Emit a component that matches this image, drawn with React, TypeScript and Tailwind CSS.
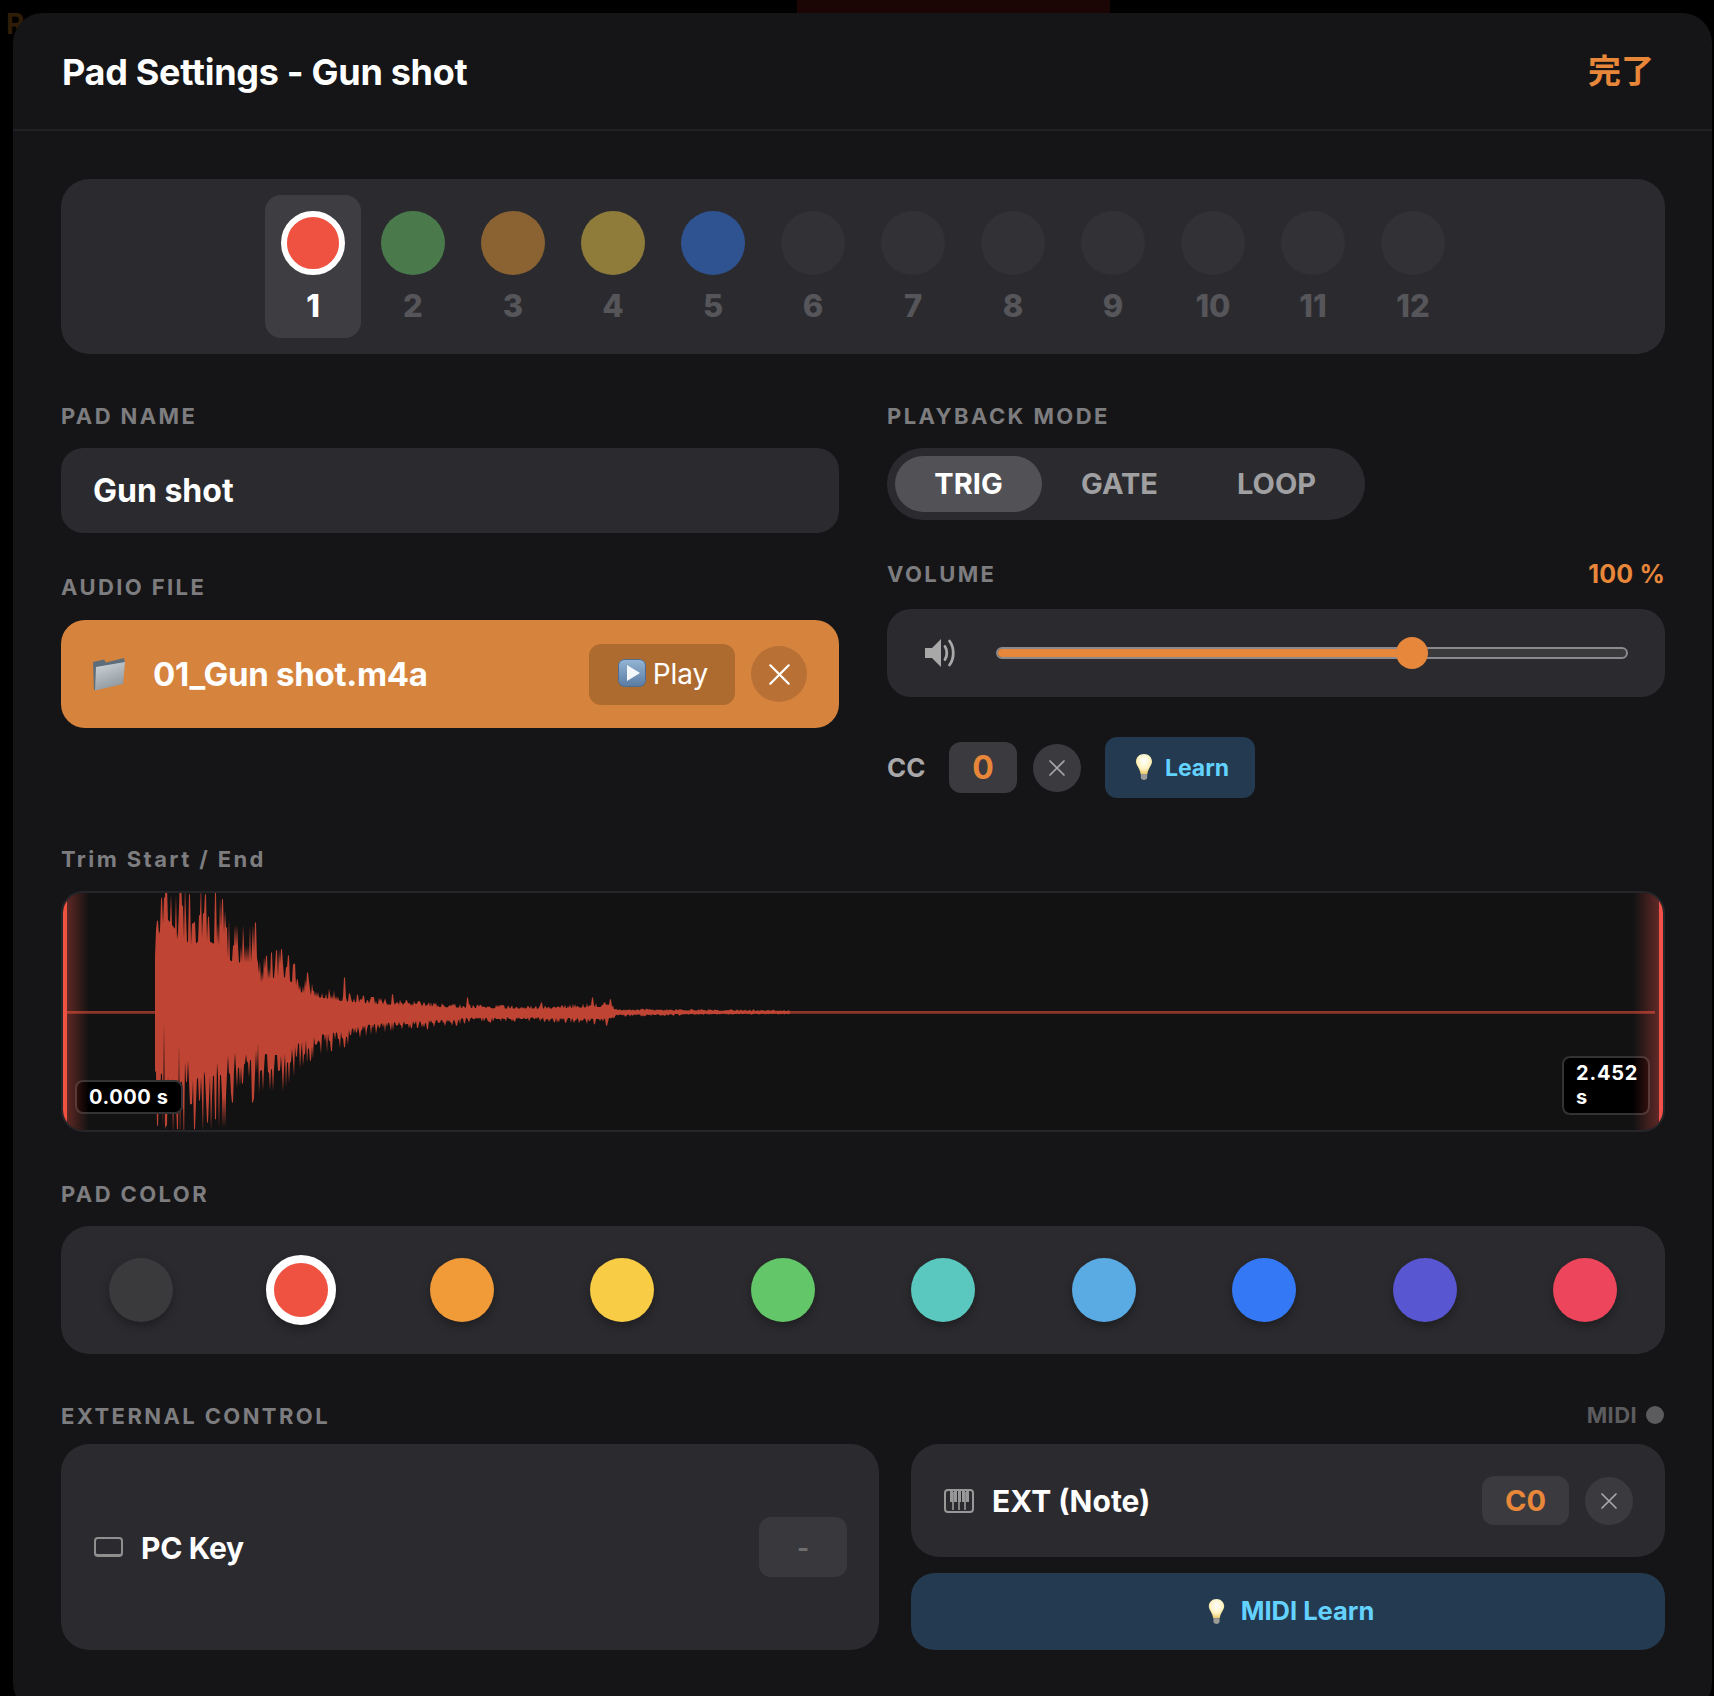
import React from "react";

const PAD_TILES = [
  { n: 1, color: "#ef5241" },
  { n: 2, color: "#4a7a4b" },
  { n: 3, color: "#8b6333" },
  { n: 4, color: "#8f7c3b" },
  { n: 5, color: "#2f5290" },
  { n: 6, color: "#323236" },
  { n: 7, color: "#323236" },
  { n: 8, color: "#323236" },
  { n: 9, color: "#323236" },
  { n: 10, color: "#323236" },
  { n: 11, color: "#323236" },
  { n: 12, color: "#323236" },
];

const SWATCHES = ["#3a3a3c", "#ef5241", "#f19a38", "#f8cd45", "#63c668", "#5ac8be", "#5aabe4", "#3478f6", "#5856d0", "#ed455b"];

// envelope points read off the reference, [zoom x, edge y] in the 2.24x / 3x crop
const TOP_ENV = [[235, 205], [245, 120], [260, 70], [290, 130], [320, 170], [340, 140], [380, 170], [395, 205], [410, 225], [455, 225], [465, 300], [480, 285], [520, 270], [550, 300], [560, 325], [590, 340], [650, 355], [720, 365], [850, 375], [950, 380], [1100, 382], [1250, 375], [1270, 387], [1500, 389], [2000, 392]];
const BOT_ENV = [[235, 600], [300, 640], [340, 620], [400, 610], [450, 560], [480, 540], [520, 545], [560, 500], [600, 475], [660, 460], [700, 440], [800, 425], [900, 420], [950, 412], [1100, 412], [1240, 418], [1270, 403], [1500, 399], [2000, 397]];
const TOP_SPIKES = [[240, 120], [255, 50], [282, 40], [295, 75], [312, 40], [348, 40], [385, 55], [395, 140], [460, 125], [483, 225], [518, 205], [545, 250], [575, 275], [658, 290], [765, 340], [935, 350], [1100, 365], [1215, 350], [1255, 355]];
const TOP_SLITS = [[285, 175], [330, 185], [375, 185]];
const BOT_SPIKES = [[240, 735], [260, 735], [285, 745], [322, 745], [352, 725], [370, 715], [407, 665], [452, 665], [488, 575], [510, 570], [530, 545], [570, 520], [600, 480], [845, 445], [910, 435], [985, 425], [1245, 435]];
const BOT_SLITS = [[255, 425], [290, 490], [345, 570], [375, 545], [440, 520], [462, 510]];

function lerpEnv(env: number[][], zx: number) {
  for (let i = 1; i < env.length; i++) {
    if (zx <= env[i][0]) {
      const [x0, y0] = env[i - 1];
      const [x1, y1] = env[i];
      return y0 + ((y1 - y0) * (zx - x0)) / (x1 - x0);
    }
  }
  return env[env.length - 1][1];
}

function buildWave() {
  let seed = 17;
  const rnd = () => {
    seed = (seed * 16807) % 2147483647;
    return seed / 2147483647;
  };
  const toAmp = (zy: number) => Math.abs(zy - 395) / 3;
  const toX = (zx: number) => Math.round(50 + zx / 2.24);
  const top = new Map<number, number>();
  const bot = new Map<number, number>();
  const xs: number[] = [];
  for (let x = 155; x <= 790; x++) {
    const zx = (x - 50) * 2.24;
    const t = toAmp(lerpEnv(TOP_ENV, zx));
    const b = toAmp(lerpEnv(BOT_ENV, zx));
    const r1 = rnd();
    const r2 = rnd();
    // sparse, sharp peaks rather than even fuzz
    const upPeak = r1 > 0.8 ? 0.55 : r1 > 0.4 ? 0.18 : -0.12;
    const downPeak = r2 > 0.82 ? 0.6 : r2 > 0.4 ? 0.16 : -0.14;
    top.set(x, Math.max(1, t * (1 + upPeak)));
    bot.set(x, Math.max(1, b * (1 + downPeak)));
    if (x < 270 && rnd() > 0.92) bot.set(x, b * 0.6);
    xs.push(x);
  }
  TOP_SPIKES.forEach(([zx, zy]) => [0, 1].forEach((d) => top.set(toX(zx) + d, toAmp(zy))));
  TOP_SLITS.forEach(([zx, zy]) => top.set(toX(zx), toAmp(zy)));
  BOT_SPIKES.forEach(([zx, zy]) => [0, 1].forEach((d) => bot.set(toX(zx) + d, toAmp(zy))));
  BOT_SLITS.forEach(([zx, zy]) => bot.set(toX(zx), toAmp(zy)));
  const cy = 119.5;
  const ox = 63;
  const up = xs.map((x) => `${x - ox} ${(cy - (top.get(x) ?? 1)).toFixed(1)}`);
  const down = xs.slice().reverse().map((x) => `${x - ox} ${(cy + (bot.get(x) ?? 1)).toFixed(1)}`);
  return `M${up.join("L")}L${down.join("L")}Z`;
}

const WAVE = buildWave();

function XIcon({ className }: { className: string }) {
  return (
    <svg viewBox="0 0 16 16" fill="none" stroke="currentColor" strokeWidth="1.7" strokeLinecap="round" className={className}>
      <path d="M1 1 15 15M15 1 1 15" />
    </svg>
  );
}

function FolderIcon() {
  return (
    <svg viewBox="0 0 32 33" className="h-[33px] w-8 shrink-0">
      <defs>
        <linearGradient id="fold" x1="0.2" y1="0" x2="0.6" y2="1">
          <stop offset="0" stopColor="#cdd3d6" />
          <stop offset="1" stopColor="#8b959d" />
        </linearGradient>
      </defs>
      <path d="M0 4 11 1.5 13 4.5 31 0 32 5 3 32 1 32Z" fill="#5e6d7a" />
      <path d="M3 9 32 4 30 26 2 32.5Z" fill="url(#fold)" />
    </svg>
  );
}

function PlayEmoji() {
  return (
    <svg viewBox="0 0 28 28" className="h-7 w-7 shrink-0 -translate-y-px">
      <defs>
        <linearGradient id="playbg" x1="0" y1="0" x2="0" y2="1">
          <stop offset="0" stopColor="#93b4d4" />
          <stop offset="1" stopColor="#5a7ca3" />
        </linearGradient>
      </defs>
      <rect x="0.5" y="0.5" width="27" height="27" rx="6" fill="url(#playbg)" stroke="#4f6c8f" />
      <path d="M9 6 22 14 9 22Z" fill="#f4f7fa" />
    </svg>
  );
}

function BulbEmoji({ className }: { className: string }) {
  const id = React.useId();
  return (
    <svg viewBox="0 0 16 26" className={className}>
      <defs>
        <radialGradient id={id} cx="0.5" cy="0.35" r="0.65">
          <stop offset="0" stopColor="#ffffff" />
          <stop offset="0.6" stopColor="#fdf3c4" />
          <stop offset="1" stopColor="#e9c96a" />
        </radialGradient>
      </defs>
      <path d="M8 0C3.4 0 0 3.4 0 7.6 0 11.4 3.6 13.6 4.6 20H11.4C12.4 13.6 16 11.4 16 7.6 16 3.4 12.6 0 8 0Z" fill={`url(#${id})`} />
      <path d="M4.8 20H11.2V23.5C11.2 25 9.5 26 8 26S4.8 25 4.8 23.5Z" fill="#9b9b98" />
    </svg>
  );
}

function SpeakerIcon() {
  return (
    <svg viewBox="0 0 31 30" className="h-[30px] w-[33px] shrink-0 text-[#a8a8a8]">
      <path d="M0 10H7L16 1V29L7 20H0Z" fill="currentColor" />
      <path d="M20 8.5C22.4 12 22.4 18 20 21.5" fill="none" stroke="currentColor" strokeWidth="2.8" strokeLinecap="round" />
      <path d="M24.5 3C29.5 9.5 29.5 20.5 24.5 27" fill="none" stroke="currentColor" strokeWidth="2.8" strokeLinecap="round" />
    </svg>
  );
}

function PianoIcon() {
  return (
    <svg viewBox="0 0 30 24" className="h-6 w-[30px] shrink-0 text-[#989898]">
      <rect x="1" y="1" width="28" height="22" rx="3" fill="none" stroke="currentColor" strokeWidth="2" />
      <path d="M9 3V21M15 3V21M21 3V21" stroke="currentColor" strokeWidth="1.6" />
      <path d="M6 2H9V13H6ZM10 2H13V13H10ZM14 2H17V13H14ZM18 2H21V13H18ZM22 2H25V13H22Z" fill="currentColor" />
    </svg>
  );
}

function Label({ children }: { children: React.ReactNode }) {
  return <div className="h-6 pt-px text-[22px] leading-6 font-bold tracking-[2.4px] text-[#7d7d80]">{children}</div>;
}

export default function App() {
  return (
    <div className="relative h-[1696px] w-[1714px] overflow-hidden bg-black pt-[13px] pl-[13px] font-['Inter','Noto_Sans_CJK_JP',sans-serif]">
      <div className="absolute top-0 left-[797px] h-4 w-[313px] bg-[#1c0505]" />
      <div className="absolute top-[3px] left-[6px] text-[28px] font-bold text-[#2f1d07]">R</div>
      <div className="relative flex h-[1700px] w-[1699px] flex-col rounded-[30px] bg-[#151517]">
        <div className="flex h-[118px] items-center justify-between border-b-2 border-[#212126] pr-[58px] pl-[49px]">
          <h1 className="translate-y-px text-[36px] leading-none font-bold tracking-[-0.3px] text-white">Pad Settings - Gun shot</h1>
          <button type="button" className="text-[33px] leading-none font-bold text-[#e8873a]">完了</button>
        </div>

        <div className="flex flex-col px-12 pt-12 pr-[47px]">
          <div className="flex h-[175px] justify-center gap-1 rounded-[28px] bg-[#2b2b2f] p-4">
            {PAD_TILES.map((t) => (
              <div key={t.n} className={`flex h-[143px] w-24 flex-col items-center rounded-2xl pt-4 ${t.n === 1 ? "bg-[#3e3e42]" : ""}`}>
                <div
                  className={`h-16 w-16 rounded-full ${t.n === 1 ? "border-[6px] border-white" : ""}`}
                  style={{ backgroundColor: t.color }}
                />
                <span className={`mt-[13px] text-[31px] leading-[36px] font-extrabold ${t.n === 1 ? "text-white" : "text-[#56565a]"}`}>{t.n}</span>
              </div>
            ))}
          </div>

          <div className="mt-[49px] grid grid-cols-[778px_778px] gap-x-12">
            <div className="flex flex-col">
              <Label>PAD NAME</Label>
              <div className="mt-[21px] flex h-[85px] items-center rounded-[22px] bg-[#2b2b2f] px-8 text-[32px] font-bold text-white">Gun shot</div>
              <div className="mt-[41px]">
                <Label>AUDIO FILE</Label>
              </div>
              <div className="mt-[22px] flex h-[108px] items-center rounded-[24px] bg-[#d6833e] pr-8 pl-8">
                <FolderIcon />
                <span className="ml-7 flex-1 translate-y-px text-[33px] font-bold tracking-[-0.3px] text-white">01_Gun shot.m4a</span>
                <button type="button" className="flex h-[61px] w-[146px] items-center justify-center gap-[7px] rounded-xl bg-[#ae6b30] pl-[2px] text-[28px] text-white">
                  <PlayEmoji />
                  Play
                </button>
                <button type="button" className="ml-4 flex h-14 w-14 items-center justify-center rounded-full bg-[#b87035] text-white">
                  <XIcon className="h-[21px] w-[21px]" />
                </button>
              </div>
            </div>

            <div className="flex flex-col">
              <Label>PLAYBACK MODE</Label>
              <div className="mt-[21px] flex h-[72px] w-[478px] items-center rounded-full bg-[#2b2b2f] p-2 text-[29px] text-[#a0a0a2]">
                <div className="flex h-14 w-[147px] items-center justify-center rounded-full bg-[#515156] font-bold text-white">TRIG</div>
                <div className="flex h-14 w-[155px] items-center justify-center font-bold">GATE</div>
                <div className="flex h-14 w-[159px] items-center justify-center font-bold">LOOP</div>
              </div>
              <div className="mt-[41px] flex items-center justify-between">
                <Label>VOLUME</Label>
                <span className="translate-y-px text-[25px] leading-6 font-bold tracking-[0.2px] text-[#e8873a]">100 %</span>
              </div>
              <div className="mt-6 flex h-[88px] items-center rounded-[24px] bg-[#2b2b2f] pr-[37px] pl-[37px]">
                <SpeakerIcon />
                <div className="relative ml-[39px] h-3 flex-1 rounded-full border-2 border-[#8a8a8c] bg-[#3a3a3c]">
                  <div className="absolute inset-y-0 left-0 w-[416px] rounded-full bg-[#e6873c]" />
                  <div className="absolute top-1/2 left-[398px] h-8 w-8 -translate-y-1/2 rounded-full bg-[#e6873c]" />
                </div>
              </div>
              <div className="mt-10 flex h-[61px] items-center">
                <span className="w-[62px] text-[26px] font-bold text-[#a8a8aa]">CC</span>
                <div className="flex h-[51px] w-[68px] items-center justify-center rounded-xl bg-[#3a3a3f] text-[32px] font-bold text-[#e8873a]">0</div>
                <button type="button" className="ml-4 flex h-12 w-12 items-center justify-center rounded-full bg-[#3a3a3f] text-[#a8a8aa]">
                  <XIcon className="h-4 w-4" />
                </button>
                <button type="button" className="ml-6 flex h-[61px] w-[150px] items-center justify-center gap-[13px] rounded-xl bg-[#233a50] pl-[5px] text-[23px] font-bold text-[#64d2ff]">
                  <BulbEmoji className="h-[26px] w-4 -translate-y-px" />
                  <span className="translate-y-px">Learn</span>
                </button>
              </div>
            </div>
          </div>

          <div className="mt-[48px]">
            <Label>Trim Start / End</Label>
          </div>
          <div className="relative mt-[21px] h-[241px] overflow-hidden rounded-[22px] border-2 border-[#26262a] bg-[#121213]">
            <svg width="1600" height="237" viewBox="0 0 1600 237" className="absolute top-0 left-0">
              <path d="M4 118H1592V120.8H4Z" fill="#8e3529" />
              <path d={WAVE} fill="#bf4433" />
            </svg>
            <div className="absolute top-[187px] left-3 rounded-lg border-2 border-[#333336] bg-black px-3 py-[3px] text-[20px] leading-[24px] font-bold tracking-[0.6px] text-white">0.000 s</div>
            <div className="absolute top-[163px] right-[13px] w-[88px] rounded-lg border-2 border-[#333336] bg-black pt-[3px] pb-1 pl-3 text-[20px] leading-[24px] font-bold tracking-[0.8px] text-white">2.452 s</div>
            <div className="absolute inset-y-0 left-0 w-[26px] border-l-4 border-[#ef5241] bg-gradient-to-r from-[#ef5241]/35 to-transparent" />
            <div className="absolute inset-y-0 right-0 w-[30px] border-r-4 border-[#f0524a] bg-gradient-to-l from-[#f0524a]/35 to-transparent" />
          </div>

          <div className="mt-[49px]">
            <Label>PAD COLOR</Label>
          </div>
          <div className="mt-[21px] flex h-32 items-center justify-between rounded-[28px] bg-[#2b2b2f] px-12">
            {SWATCHES.map((c, i) => (
              <div
                key={c}
                className={`rounded-full shadow-[0_4px_10px_rgba(0,0,0,0.3)] ${i === 1 ? "-m-[3px] h-[70px] w-[70px] border-[8px] border-white" : "h-16 w-16"}`}
                style={{ backgroundColor: c }}
              />
            ))}
          </div>

          <div className="mt-[49px] flex items-center justify-between">
            <Label>EXTERNAL CONTROL</Label>
            <div className="flex items-center gap-[9px] pr-px text-[22px] leading-6 font-bold tracking-[0.4px] text-[#5c5c5f]">
              MIDI
              <span className="h-[18px] w-[18px] rounded-full bg-[#5c5c5f]" />
            </div>
          </div>
          <div className="mt-[17px] grid h-[206px] grid-cols-[818px_754px] gap-x-8">
            <div className="flex items-center rounded-[28px] bg-[#2b2b2f] pr-8 pl-[33px]">
              <span className="h-5 w-[29px] rounded border-2 border-b-[3px] border-[#8f8f8f]" />
              <span className="ml-[18px] flex-1 translate-y-px text-[30px] font-bold tracking-[-0.3px] text-white">PC Key</span>
              <div className="flex h-[60px] w-[88px] items-center justify-center rounded-xl bg-[#38383d] text-[26px] font-bold text-[#6e6e70]">-</div>
            </div>
            <div className="flex flex-col gap-4">
              <div className="flex h-[113px] items-center rounded-[28px] bg-[#2b2b2f] pr-8 pl-[33px]">
                <PianoIcon />
                <span className="ml-[18px] flex-1 translate-y-px text-[30px] font-bold text-white">EXT (Note)</span>
                <div className="flex h-[49px] w-[87px] items-center justify-center rounded-xl bg-[#3a3a3f] text-[29px] font-bold text-[#e8873a]">C0</div>
                <button type="button" className="ml-4 flex h-12 w-12 items-center justify-center rounded-full bg-[#3a3a3f] text-[#a8a8aa]">
                  <XIcon className="h-4 w-4" />
                </button>
              </div>
              <button type="button" className="flex h-[77px] items-center justify-center gap-[15px] rounded-[24px] bg-[#233a50] pl-[5px] text-[25.5px] font-bold text-[#64d2ff]">
                <BulbEmoji className="h-[25px] w-[19px]" />
                <span>MIDI Learn</span>
              </button>
            </div>
          </div>
        </div>
      </div>
    </div>
  );
}
